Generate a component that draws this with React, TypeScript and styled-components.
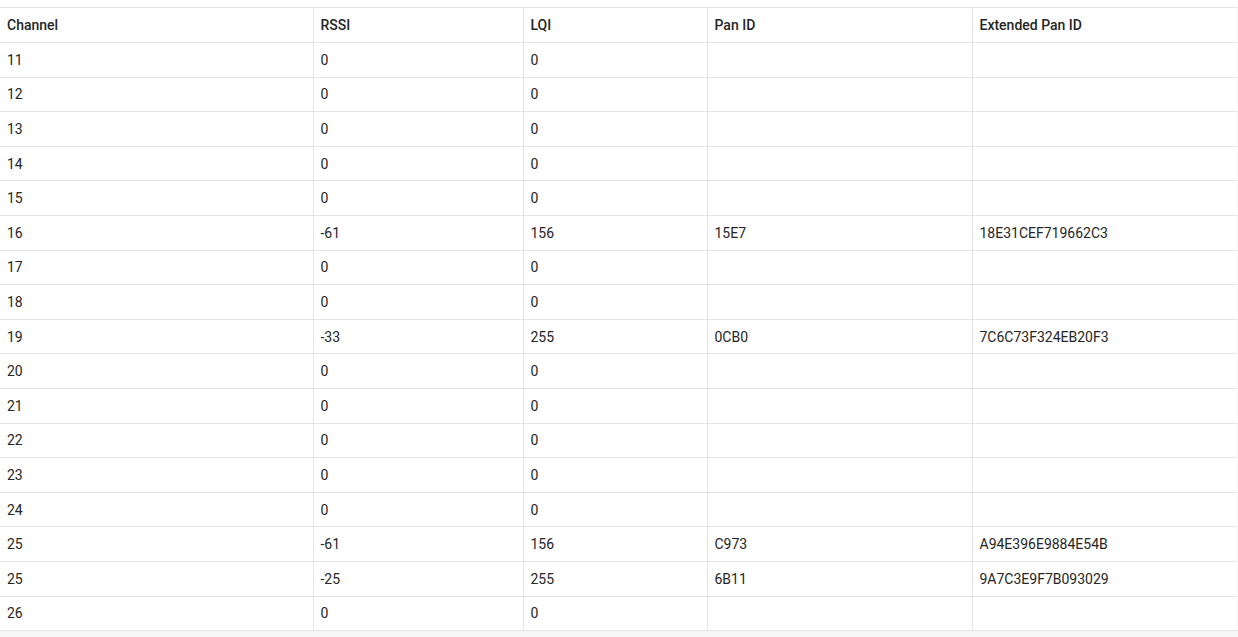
import styled, { createGlobalStyle } from 'styled-components';

const GlobalStyle = createGlobalStyle`
    html, body {
        margin: 0;
        padding: 0;
        background: #f6f6f6;
        font-family: Roboto, "Liberation Sans", sans-serif;
    }
`;

const Panel = styled.div`
    background: #ffffff;
    padding-top: 7px;
    width: 1237px;
`;

const Table = styled.table`
    width: 1237px;
    border-collapse: collapse;
    table-layout: fixed;
    font-size: 14px;
    color: #262626;
    border-top: 1px solid #e4e4e4;
`;

const HeadCell = styled.th<{ $w: number }>`
    width: ${(p) => p.$w}px;
    height: 35px;
    padding: 0 7px;
    text-align: left;
    font-weight: 500;
    border-bottom: 1px solid #e4e4e4;
    border-left: 1px solid #e4e4e4;
    box-sizing: border-box;

    &:first-child {
        border-left: none;
    }
`;

const Row = styled.tr`
    height: 34.6px;
`;

const Cell = styled.td`
    padding: 0 7px;
    border-bottom: 1px solid #e4e4e4;
    border-left: 1px solid #e4e4e4;
    white-space: nowrap;

    &:first-child {
        border-left: none;
    }
`;

const columns = [
    { label: 'Channel', width: 313 },
    { label: 'RSSI', width: 210 },
    { label: 'LQI', width: 184 },
    { label: 'Pan ID', width: 265 },
    { label: 'Extended Pan ID', width: 265 },
];

const rows: string[][] = [
    ['11', '0', '0', '', ''],
    ['12', '0', '0', '', ''],
    ['13', '0', '0', '', ''],
    ['14', '0', '0', '', ''],
    ['15', '0', '0', '', ''],
    ['16', '-61', '156', '15E7', '18E31CEF719662C3'],
    ['17', '0', '0', '', ''],
    ['18', '0', '0', '', ''],
    ['19', '-33', '255', '0CB0', '7C6C73F324EB20F3'],
    ['20', '0', '0', '', ''],
    ['21', '0', '0', '', ''],
    ['22', '0', '0', '', ''],
    ['23', '0', '0', '', ''],
    ['24', '0', '0', '', ''],
    ['25', '-61', '156', 'C973', 'A94E396E9884E54B'],
    ['25', '-25', '255', '6B11', '9A7C3E9F7B093029'],
    ['26', '0', '0', '', ''],
];

export default function App() {
    return (
        <>
            <GlobalStyle />
            <Panel>
                <Table>
                    <thead>
                        <tr>
                            {columns.map((col) => (
                                <HeadCell key={col.label} $w={col.width}>
                                    {col.label}
                                </HeadCell>
                            ))}
                        </tr>
                    </thead>
                    <tbody>
                        {rows.map((row, i) => (
                            <Row key={i}>
                                {row.map((value, j) => (
                                    <Cell key={j}>{value}</Cell>
                                ))}
                            </Row>
                        ))}
                    </tbody>
                </Table>
            </Panel>
        </>
    );
}
